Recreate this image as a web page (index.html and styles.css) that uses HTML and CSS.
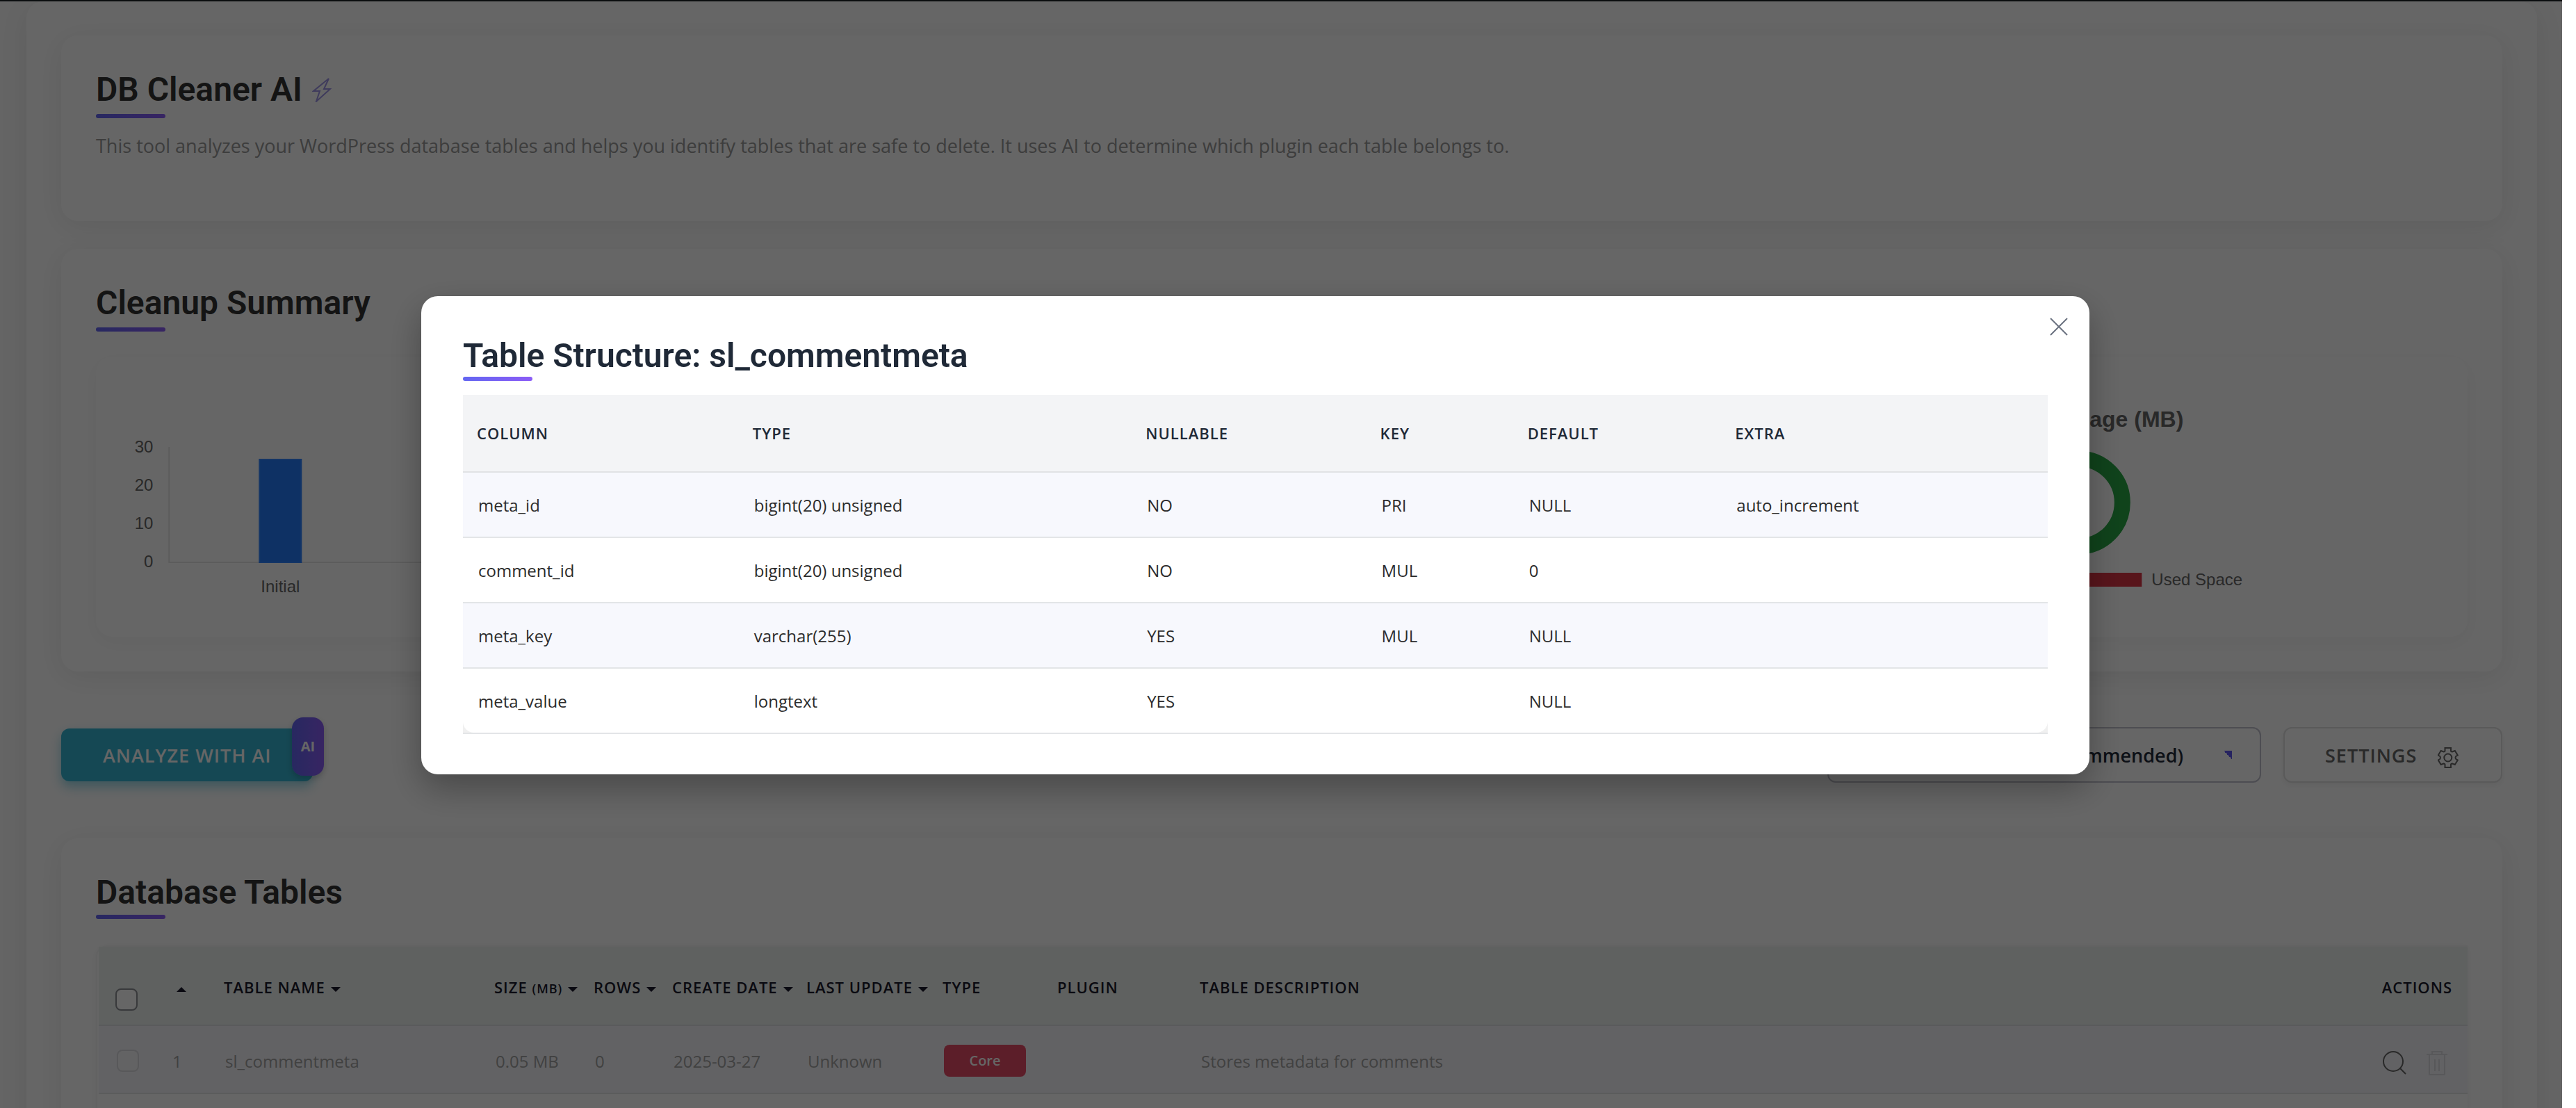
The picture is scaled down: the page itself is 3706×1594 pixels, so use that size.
FILE: index.html
```html
<!DOCTYPE html>
<html lang="en">
<head>
<meta charset="utf-8">
<title>DB Cleaner AI</title>
<link rel="stylesheet" href="styles.css">
</head>
<body>
<main class="page">
  <div class="wrap">
    <section class="card card-intro">
      <h1 class="title">DB Cleaner AI
        <svg class="bolt" viewBox="0 0 28 36" aria-hidden="true"><path d="M24 2 2 20h9L6 35 26 17H17z"/></svg>
      </h1>
      <p class="intro">This tool analyzes your WordPress database tables and helps you identify tables that are safe to delete. It uses AI to determine which plugin each table belongs to.</p>
    </section>

    <section class="card card-summary">
      <h2 class="title">Cleanup Summary</h2>
      <div class="charts">
        <div class="chart">
          <svg class="chart-svg" viewBox="0 0 1110 400" role="img" aria-label="Tables">
            <path class="axis" d="M105 130v166h960"/>
            <rect class="bar" x="235" y="148" width="60" height="148"/>
            <text class="tick" x="82" y="138" text-anchor="end">30</text>
            <text class="tick" x="82" y="193" text-anchor="end">20</text>
            <text class="tick" x="82" y="248" text-anchor="end">10</text>
            <text class="tick" x="82" y="303" text-anchor="end">0</text>
            <text class="tick" x="265" y="339" text-anchor="middle">Initial</text>
          </svg>
        </div>
        <div class="chart"></div>
        <div class="chart">
          <svg class="chart-svg" viewBox="0 0 1110 400" role="img" aria-label="Storage usage">
            <text class="chart-title" x="702" y="101" text-anchor="end">Storage Usage (MB)</text>
            <circle class="ring" cx="551" cy="210" r="63"/>
            <rect class="swatch" x="562" y="311" width="80" height="20"/>
            <text class="tick" x="656" y="329">Used Space</text>
          </svg>
        </div>
      </div>
    </section>

    <div class="toolbar">
      <button class="btn btn-analyze" type="button">ANALYZE WITH AI<span class="tag">AI</span></button>
      <div class="toolbar-right">
        <select class="model" aria-label="AI model"><option>GPT-4o Mini (Recommended)</option></select>
        <button class="btn btn-settings" type="button">SETTINGS
          <svg class="gear" viewBox="0 0 30 30" aria-hidden="true"><path d="M10.500 1H19v4q0 1.500 2 1.500L24.800 5l4 6.500-2.500 1.500q-1.500 2 0 4l2.500 1.500-4 6.500-3.800-1.500q-2 0-2 1.500v4h-8.500v-4q0-1.500-2-1.500L4.700 25l-4-6.500L3.200 17q1.500-2 0-4L.7 11.500l4-6.500 3.800 1.500q2 0 2-1.500z"/><circle cx="14.800" cy="15" r="5.500"/></svg>
        </button>
      </div>
    </div>

    <section class="card card-tables">
      <h2 class="title title-tables">Database Tables</h2>
      <div class="table-box">
        <table class="db">
          <colgroup><col class="d1"><col class="d2"><col class="d3"><col class="d4"><col class="d5"><col class="d6"><col class="d7"><col class="d8"><col class="d9"><col class="d10"><col class="d11"></colgroup>
          <thead><tr>
            <th class="pick"><input class="check" type="checkbox" aria-label="Select all"></th>
            <th><span class="arrow up"></span></th>
            <th>TABLE NAME<span class="arrow"></span></th>
            <th>SIZE <small class="unit">(MB)</small><span class="arrow"></span></th>
            <th>ROWS<span class="arrow"></span></th>
            <th>CREATE DATE<span class="arrow"></span></th>
            <th>LAST UPDATE<span class="arrow"></span></th>
            <th>TYPE</th><th>PLUGIN</th><th>TABLE DESCRIPTION</th>
            <th class="end">ACTIONS</th>
          </tr></thead>
          <tbody>
            <tr>
              <td><input class="check off" type="checkbox" disabled aria-label="Select sl_commentmeta"></td>
              <td>1</td><td>sl_commentmeta</td><td>0.05 MB</td><td>0</td><td>2025-03-27</td><td>Unknown</td>
              <td><span class="core">Core</span></td><td></td><td>Stores metadata for comments</td>
              <td class="end"><div class="actions">
                <button class="icon" type="button" aria-label="View structure"><svg viewBox="0 0 36 36"><circle cx="15" cy="15" r="14"/><path d="m25 25 8 8"/></svg></button>
                <button class="icon dim" type="button" disabled aria-label="Delete"><svg viewBox="0 0 36 36"><path d="M3 5h30M11 5V1h14v4M7 5v29h22V5M15 12v17M21 12v17"/></svg></button>
              </div></td>
            </tr>
            <tr class="plain"><td colspan="11"></td></tr>
          </tbody>
        </table>
      </div>
    </section>
  </div>
</main>

<div class="overlay">
  <div class="modal" role="dialog" aria-modal="true" aria-labelledby="structure-title">
    <button class="close" type="button" aria-label="Close"><svg viewBox="0 0 26 26"><path d="m1 1 24 24M25 1 1 25"/></svg></button>
    <h2 class="title title-modal" id="structure-title">Table Structure: sl_commentmeta</h2>
    <table class="structure">
      <colgroup><col class="s1"><col class="s2"><col class="s3"><col class="s4"><col class="s5"><col></colgroup>
      <thead><tr><th>COLUMN</th><th>TYPE</th><th>NULLABLE</th><th>KEY</th><th>DEFAULT</th><th>EXTRA</th></tr></thead>
      <tbody>
        <tr><td>meta_id</td><td>bigint(20) unsigned</td><td>NO</td><td>PRI</td><td>NULL</td><td>auto_increment</td></tr>
        <tr><td>comment_id</td><td>bigint(20) unsigned</td><td>NO</td><td>MUL</td><td>0</td><td></td></tr>
        <tr><td>meta_key</td><td>varchar(255)</td><td>YES</td><td>MUL</td><td>NULL</td><td></td></tr>
        <tr><td>meta_value</td><td>longtext</td><td>YES</td><td></td><td>NULL</td><td></td></tr>
      </tbody>
    </table>
  </div>
</div>
</body>
</html>
```

FILE: styles.css
```css
* { box-sizing: border-box; }

html { background: #fff; }

body {
  margin: 0;
  font-family: "Open Sans", "Noto Sans", sans-serif;
  font-size: 24px;
  color: #333;
}

.page {
  height: 100vh;
  overflow: hidden;
  margin-right: 20px;
  padding: 0 36px 0 38px;
  border-top: 2px solid #1d2327;
  background: #fcfcfc;
}

.wrap {
  padding: 49px 50px 0;
  border-radius: 24px;
  background: #fff;
  box-shadow: 0 10px 40px rgba(0, 0, 0, 0.08);
}

.card {
  padding: 49px 50px 50px;
  border-radius: 24px;
  background: #fff;
  box-shadow: 0 8px 40px rgba(0, 0, 0, 0.08);
}

.card-intro { height: 267px; margin-bottom: 40px; }
.card-tables { padding-bottom: 0; }

.title {
  position: relative;
  display: flex;
  align-items: center;
  gap: 14px;
  height: 70px;
  margin: 0;
  padding-bottom: 12px;
  font-family: Roboto, sans-serif;
  font-size: 48px;
  font-weight: 600;
  line-height: 58px;
  color: #333;
}

.title::after {
  content: "";
  position: absolute;
  left: 0;
  bottom: 0;
  width: 100px;
  height: 6px;
  border-radius: 3px;
  background: linear-gradient(90deg, #6366f1, #8b5cf6);
}

.title-tables { height: 67px; padding-bottom: 9px; }
.title-modal { padding-bottom: 2px; color: #1f2937; }

.bolt { width: 28px; height: 36px; fill: none; stroke: #9d95e6; stroke-width: 2; }

.intro { margin: 21px 0 0; font-size: 27px; line-height: 38px; color: #999; }

.charts {
  display: grid;
  grid-template-columns: repeat(3, 1fr);
  gap: 40px;
  margin-top: 36px;
}

.chart {
  height: 403px;
  border-radius: 24px;
  box-shadow: 0 8px 30px rgba(0, 0, 0, 0.04);
}

.chart-svg { display: block; width: 100%; height: 400px; }
.axis { fill: none; stroke: #e5e5e5; stroke-width: 2; }
.bar { fill: #237bfa; stroke: #3384ff; stroke-width: 2; }
.tick { font: 24px "Liberation Sans", Arial, sans-serif; fill: #666; }
.chart-title { font: bold 32px "Liberation Sans", Arial, sans-serif; fill: #666; }
.ring { fill: none; stroke: #28a745; stroke-width: 23; }
.swatch { fill: #dc3545; }

.toolbar {
  display: flex;
  justify-content: space-between;
  align-items: center;
  padding: 80px 0;
}

.toolbar-right { display: flex; gap: 32px; }

.btn {
  border-radius: 12px;
  font-family: inherit;
  font-size: 27px;
  font-weight: 600;
  letter-spacing: 1px;
}

.btn-analyze {
  position: relative;
  width: 362px;
  height: 76px;
  padding: 0 0 0 60px;
  border: 0;
  background: #36b4d1;
  box-shadow: 0 8px 16px rgba(54, 180, 209, 0.5);
  color: #fff;
  text-align: left;
}

.tag {
  position: absolute;
  top: -16px;
  right: -16px;
  width: 46px;
  height: 84px;
  border-radius: 16px;
  background: linear-gradient(90deg, #6366f1, #8b5cf6);
  box-shadow: 0 4px 10px rgba(0, 0, 0, 0.2);
  font-size: 20px;
  font-weight: 700;
  line-height: 84px;
  letter-spacing: 0;
  text-align: center;
}

.model {
  appearance: none;
  width: 624px;
  height: 80px;
  padding: 0 110px 0 40px;
  border: 2px solid #c0c0cc;
  border-radius: 12px;
  background: linear-gradient(45deg, transparent 50%, #6058f0 50%) no-repeat right 40px center / 12px 12px #fff;
  font: 600 27px "Open Sans", "Noto Sans", sans-serif;
  color: #1f2937;
  text-align: right;
}

.btn-settings {
  display: flex;
  align-items: center;
  gap: 30px;
  width: 315px;
  height: 80px;
  padding: 0 0 0 58px;
  border: 2px solid #e0e0e0;
  background: #fff;
  box-shadow: 0 4px 8px rgba(0, 0, 0, 0.05);
  color: #666;
}

.gear { width: 30px; height: 38px; padding-top: 8px; fill: none; stroke: #666; stroke-width: 2; }

.table-box {
  margin-top: 38px;
  padding-left: 2px;
  border: 2px solid #f6f6f6;
  border-right: 0;
  border-radius: 16px 0 0 0;
  box-shadow: 0 2px 10px rgba(0, 0, 0, 0.05);
}

table { width: 100%; border-collapse: separate; border-spacing: 0; table-layout: fixed; }
th, td { text-align: left; white-space: nowrap; }

th {
  height: 112px;
  padding: 0 20px;
  border-bottom: 2px solid #e1e3e5;
  font-size: 22px;
  font-weight: 600;
  letter-spacing: 1px;
  color: #1f2937;
}

td { height: 94px; padding: 0 22px; border-bottom: 2px solid #e3e5e7; }

.db th { height: 114px; padding: 4px 0 0 10px; background: #eef2f0; color: #1a1a2c; }
.db td { height: 98px; padding: 4px 0 0 12px; background: #f6f6fa; color: #a3a3a3; }
.db .pick { padding: 40px 0 0 24px; }
.db td:first-child { padding-left: 26px; }
.db .plain td { background: #fff; }
.db .end { padding-right: 22px; text-align: right; }
.db td.end { padding-right: 26px; }

.d1 { width: 94px; } .d2 { width: 76px; } .d3 { width: 389px; } .d4 { width: 143px; }
.d5 { width: 113px; } .d6 { width: 193px; } .d7 { width: 196px; } .d8 { width: 165px; }
.d9 { width: 205px; } .d11 { width: 200px; }

.arrow {
  display: inline-block;
  margin-left: 8px;
  border: 7px solid transparent;
  border-top-color: currentColor;
  border-bottom: 0;
  vertical-align: 2px;
}

.up { border-top: 0; border-bottom: 7px solid currentColor; }
.unit { font-size: 18px; letter-spacing: 1px; }

.check {
  appearance: none;
  display: block;
  width: 32px;
  height: 32px;
  margin: 0;
  border: 2px solid #8c8f94;
  border-radius: 8px;
  background: #fff;
}

.off { border-color: #dcdce0; background: #f8f8fa; }

.core {
  display: inline-block;
  width: 118px;
  height: 46px;
  border-radius: 8px;
  background: #e64b66;
  font-size: 20px;
  font-weight: 600;
  line-height: 46px;
  text-align: center;
  color: #fff;
}

.actions { display: flex; justify-content: flex-end; gap: 24px; padding-top: 8px; }

.icon { width: 36px; height: 36px; padding: 0; border: 0; background: none; }
.icon svg { display: block; width: 36px; height: 36px; fill: none; stroke: #666; stroke-width: 2; }
.dim svg { stroke: #dcdce0; }

.overlay {
  position: fixed;
  inset: 0 20px 0 0;
  display: flex;
  align-items: center;
  justify-content: center;
  padding: 0 74px 54px 0;
  background: rgba(0, 0, 0, 0.6);
}

.modal {
  position: relative;
  width: 100%;
  max-width: 2400px;
  padding: 52px 60px 58px;
  border-radius: 24px;
  background: #fff;
  box-shadow: 0 20px 50px rgba(0, 0, 0, 0.3);
}

.close {
  position: absolute;
  top: 31px;
  right: 31px;
  width: 26px;
  height: 26px;
  padding: 0;
  border: 0;
  background: none;
}

.close svg { display: block; width: 26px; height: 26px; fill: none; stroke: #6b7280; stroke-width: 2; }

.structure { margin-top: 20px; border-bottom: 2px solid #e3e5e7; background: #f0f0f0; }
.structure th { background: #f3f4f6; }
.structure td { background: #fff; color: #2c2c2c; }
.structure tr:nth-child(odd) td { background: #f7f8fd; }
.structure tr:last-child td { height: 92px; border-bottom: 0; }
.structure tr:last-child td:first-child { border-bottom-left-radius: 16px; }
.structure tr:last-child td:last-child { border-bottom-right-radius: 16px; }

.s1 { width: 17.4%; } .s2 { width: 24.8%; } .s3 { width: 14.8%; } .s4 { width: 9.3%; } .s5 { width: 13.1%; }
```
